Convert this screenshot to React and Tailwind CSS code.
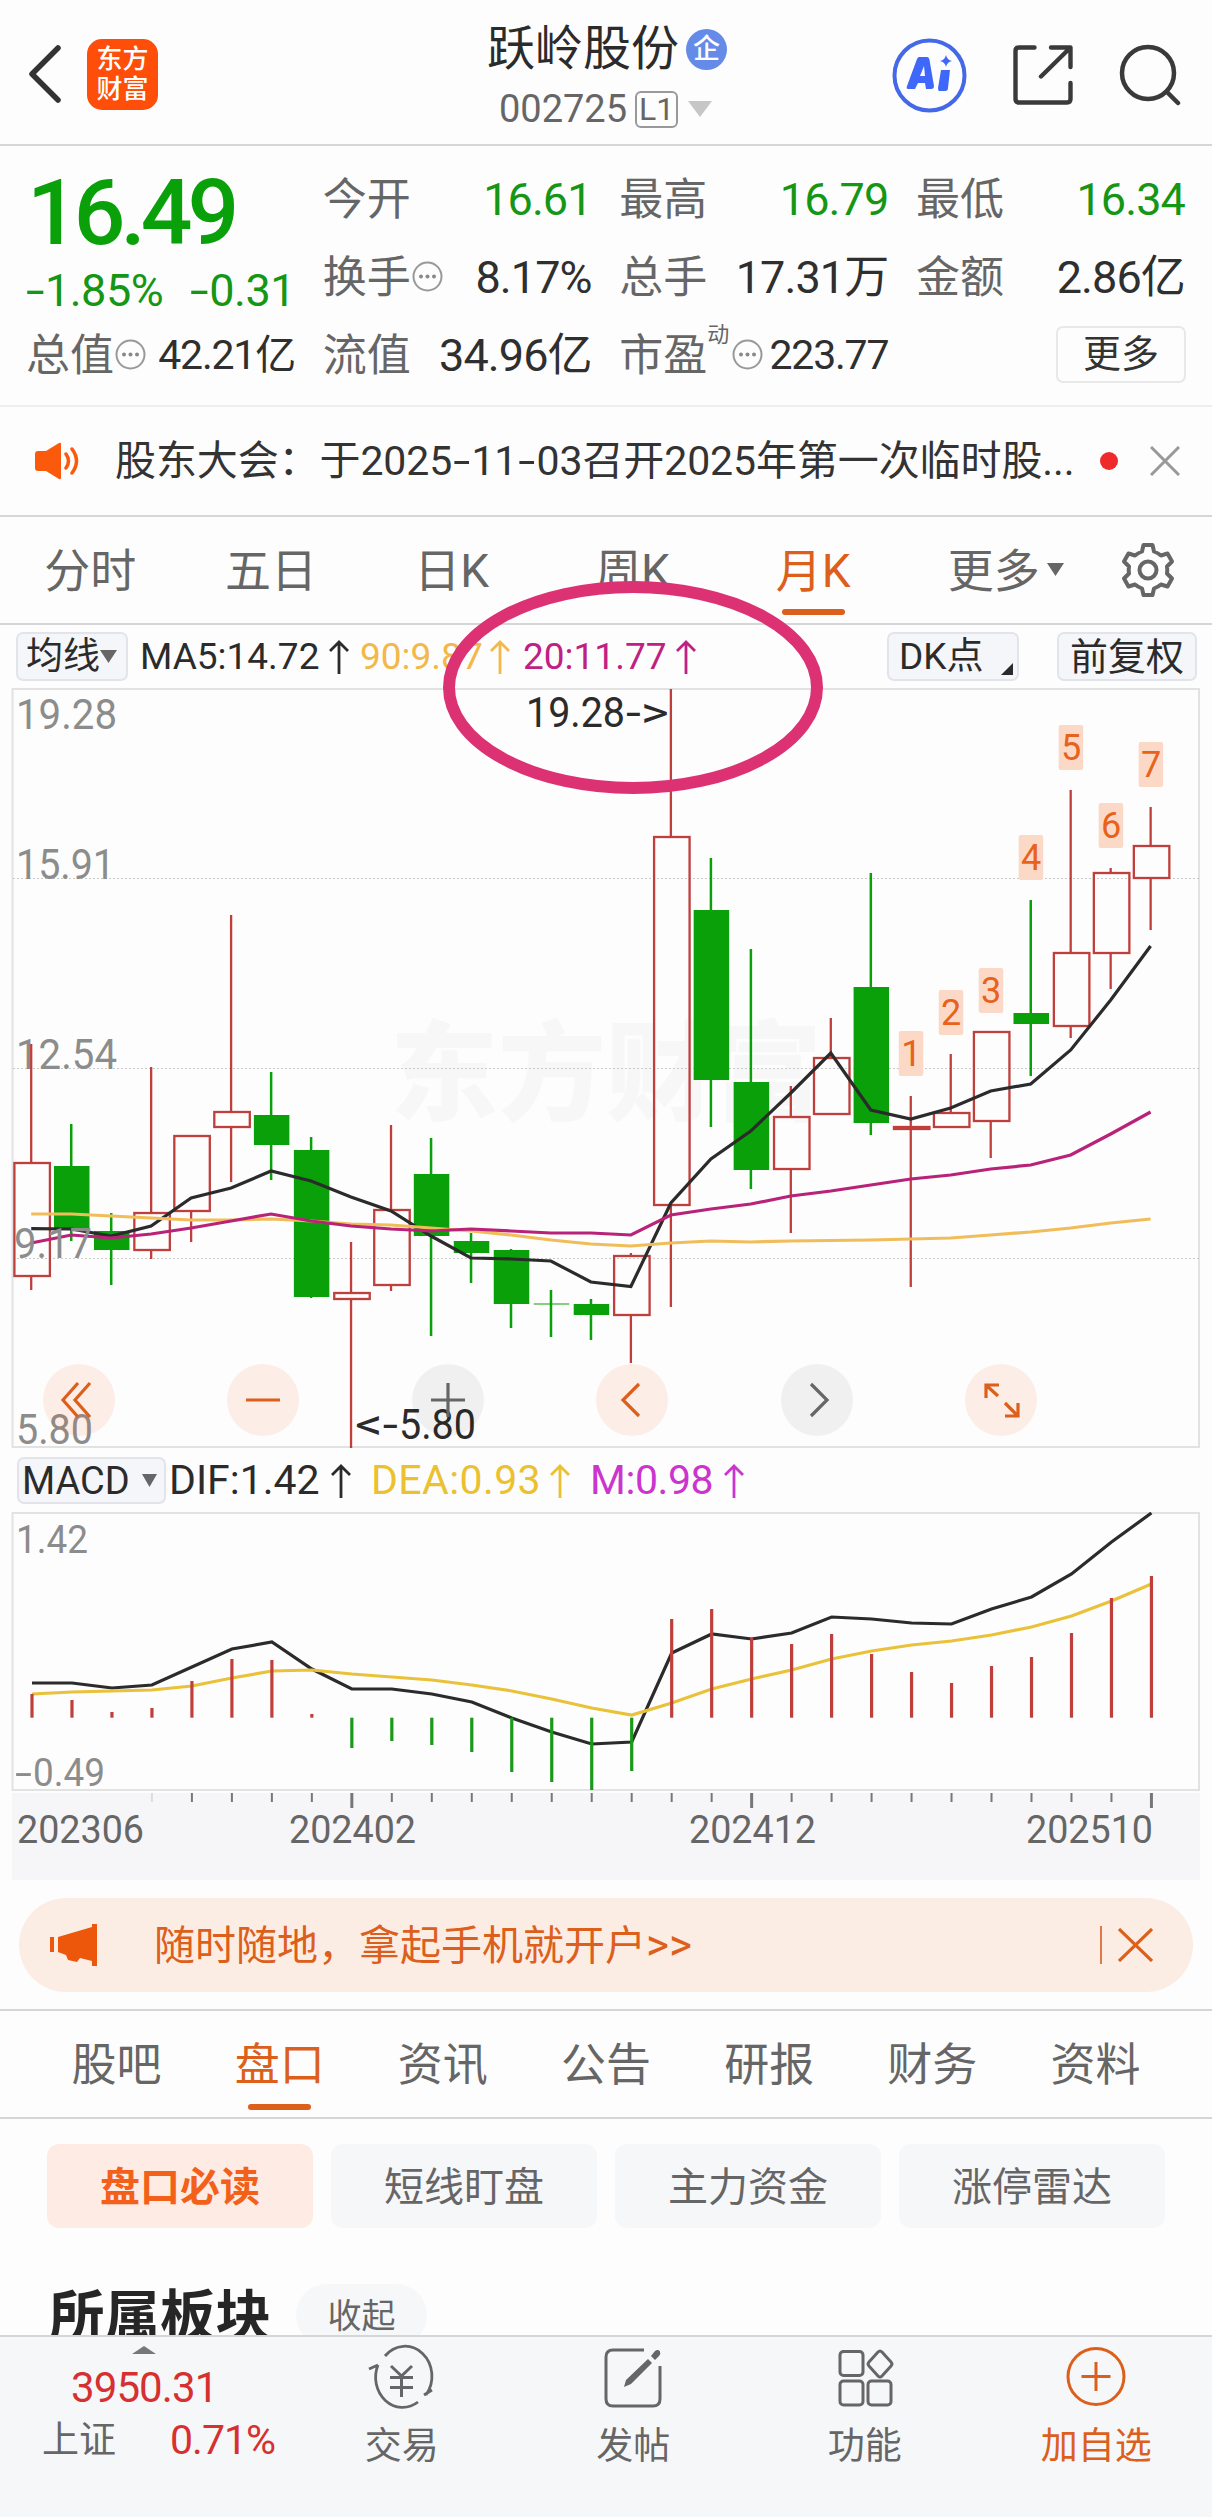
const RED = '#bf3f3c';
const GREEN = '#0aa00a';

// [up, high, bodyTop, bodyBottom, low]
const candles = [
    [1, 1044, 1163, 1276, 1290],
    [0, 1124, 1166, 1230, 1241],
    [0, 1213, 1231, 1250, 1285],
    [1, 1067, 1213, 1250, 1259],
    [1, 1136, 1136, 1211, 1242],
    [1, 915, 1112, 1127, 1182],
    [0, 1072, 1115, 1145, 1180],
    [0, 1137, 1150, 1297, 1298],
    [1, 1242, 1293, 1299, 1448],
    [1, 1125, 1210, 1285, 1291],
    [0, 1138, 1174, 1236, 1336],
    [0, 1233, 1241, 1253, 1283],
    [0, 1249, 1250, 1304, 1328],
    [0, 1290, 1303.5, 1304.5, 1337],
    [0, 1299, 1304, 1315, 1340],
    [1, 1253, 1256, 1315, 1363],
    [1, 689, 837, 1205, 1307],
    [0, 858, 910, 1080, 1127],
    [0, 949, 1082, 1170, 1189],
    [1, 1086, 1117, 1169, 1233],
    [1, 1018, 1058, 1114, 1114],
    [0, 873, 987, 1123, 1135],
    [1, 1096, 1127, 1129, 1287],
    [1, 1054, 1113, 1127, 1127],
    [1, 1032, 1032, 1121, 1158],
    [0, 900, 1013, 1024, 1076],
    [1, 790, 953, 1026, 1038],
    [1, 868, 873, 953, 989],
    [1, 807, 846, 878, 930],
];

const ma5 = [1228.7, 1229, 1236, 1226, 1198, 1188, 1171, 1181, 1197, 1211, 1236, 1258, 1259, 1261, 1282, 1286.5, 1203, 1159, 1131, 1093, 1053, 1110, 1119, 1108, 1091, 1084, 1050, 1000, 946];
const ma20 = [1243, 1235, 1238, 1234, 1228, 1221, 1214, 1221, 1226, 1229, 1231, 1229, 1231, 1233, 1233, 1235, 1215, 1209, 1204, 1196, 1191, 1185, 1179, 1175, 1169, 1165, 1155, 1134, 1112];
const ma90 = [1214, 1214, 1216, 1218, 1220, 1220, 1219, 1221, 1224, 1225, 1228, 1231, 1235, 1240, 1244, 1246, 1243, 1241, 1242, 1241, 1240.5, 1240, 1239, 1238, 1235, 1232, 1228, 1223, 1219];

const dif = [1683, 1683, 1688, 1685, 1667, 1649, 1642, 1669, 1689, 1689, 1694, 1702, 1718, 1732, 1744, 1742, 1653, 1634, 1639, 1633, 1617, 1619, 1623, 1624, 1609, 1597, 1574, 1542, 1513];
const dea = [1694, 1692, 1691, 1690, 1686, 1678, 1671, 1670, 1674, 1677, 1680, 1685, 1691, 1699, 1708, 1715, 1703, 1689, 1679, 1670, 1659, 1651, 1645, 1641, 1635, 1627, 1616, 1601, 1584];
const macd = [1694, 1700, 1712, 1708, 1681, 1659, 1660, 1714, 1748, 1741, 1745, 1752, 1772, 1782, 1790, 1771, 1619, 1609, 1638, 1644, 1634, 1654, 1672, 1683, 1666, 1657, 1633, 1598, 1576];
const ZERO = 1717.7;

// [number, candle index, top]
const tags = [[1, 22, 1031], [2, 23, 990], [3, 24, 968], [4, 25, 835], [5, 26, 725], [6, 27, 803], [7, 28, 742]];

const cx = (i) => 31.2 + 39.98 * i;
const line = (ys, dx = 0) => ys.map((y, i) => `${(cx(i) + dx).toFixed(1)},${y}`).join(' ');

function Label({ x, y, w, size = 42, fill = '#8c8c8c', children }) {
    return (
        <text x={x} y={y} fontSize={size} fill={fill} textLength={w} lengthAdjust="spacingAndGlyphs">{children}</text>
    );
}

// wide hyphen
function Dash() {
    return <span className="mx-[4px] inline-block scale-x-150">-</span>;
}

function Header() {
    return (
        <header className="h-[146px] border-b-2 border-[#d6d6d8] flex items-center justify-between pl-[27px] pr-[31px]">
            <div className="flex w-[300px] items-center gap-[24px] pt-1">
                <svg className="w-9 h-[60px]" viewBox="0 0 36 60" fill="none" stroke="#333" strokeWidth="5.5" strokeLinecap="round" strokeLinejoin="round">
                    <path d="M31 4 L5 30 L31 56" />
                </svg>
                <div className="flex h-[71px] w-[71px] flex-col items-center justify-center rounded-[15px] bg-[#ff4d0a] text-[26px] leading-[30px] font-medium text-white">
                    <span>东方</span>
                    <span>财富</span>
                </div>
            </div>
            <div className="flex flex-col items-center pt-[5px] pl-[3px]">
                <div className="flex items-center gap-[7px] pl-[3px]">
                    <h1 className="text-[48px] leading-[58px] text-[#2b2b2b]">跃岭股份</h1>
                    <span className="flex h-[41px] w-[41px] items-center justify-center rounded-full bg-[#658be8] text-[27px] leading-none font-medium text-white">企</span>
                </div>
                <div className="mt-[7px] flex items-center pt-[4px]">
                    <span className="text-[38px] leading-[40px] text-[#666]">002725</span>
                    <span className="ml-2 flex h-[37px] w-[43px] items-center justify-center rounded-[6px] border-2 border-[#999] text-[32px] leading-none text-[#666]">L1</span>
                    <svg className="ml-[10px] h-4 w-6" viewBox="0 0 24 16"><path d="M0 0H24L12 16Z" fill="#c6c6c6" /></svg>
                </div>
            </div>
            <div className="flex w-[300px] items-center justify-end gap-[46px] pt-[6px]">
                <svg className="h-[75px] w-[75px] shrink-0" viewBox="0 0 75 75">
                    <circle cx="37.5" cy="37.5" r="35" fill="none" stroke="#4368e8" strokeWidth="4" />
                    <path fillRule="evenodd" fill="#3f68fb" d="M27 19 H35 Q37 19 37.500 22 L42 48 Q42 51 39 51 H34 L33 45 H26 L23 51 H16 Q14 51 15 48 L25 21 Q26 19 27 19Z M32 28 L28 38 H33Z" />
                    <path fill="#3f68fb" d="M49 32 H58 L56 50 Q56 53 53 53 H47 Q46 53 46 50Z M54 17 Q55 22 60 23 Q55 24 54 29 Q53 24 48 23 Q53 22 54 17Z" />
                </svg>
                <svg className="h-[60px] w-[60px] shrink-0" viewBox="0 0 60 60" fill="none" stroke="#3a3a3a" strokeWidth="4.400" strokeLinecap="round" strokeLinejoin="round">
                    <path d="M21.500 2.500H6Q2.500 2.500 2.500 6V54Q2.500 57.500 6 57.500H54Q57.500 57.500 57.500 54V38" />
                    <path d="M38 2.500H57.500V22M57 3L28 31.500" />
                </svg>
                <svg className="h-[62px] w-[62px] shrink-0" viewBox="0 0 62 62" fill="none" stroke="#3a3a3a" strokeWidth="4.500" strokeLinecap="round">
                    <circle cx="29" cy="29" r="26" />
                    <path d="M48 48L59 59" />
                </svg>
            </div>
        </header>
    );
}

function Dots() {
    return (
        <svg className="h-[31px] w-[31px] shrink-0" viewBox="0 0 31 31">
            <circle cx="15.500" cy="15.500" r="14" fill="none" stroke="#999" strokeWidth="2" />
            <circle cx="9" cy="15.500" r="2" fill="#888" />
            <circle cx="15.500" cy="15.500" r="2" fill="#888" />
            <circle cx="22" cy="15.500" r="2" fill="#888" />
        </svg>
    );
}

function Stat({ label, value, green, dots, small, sup }) {
    return (
        <div className="flex h-[78px] items-center justify-between pt-[3px] leading-none">
            <div className="relative -ml-px flex items-center text-[44px] text-[#666]">
                {label}
                {sup && <span className="absolute -top-[10px] left-[88px] text-[22px]">{sup}</span>}
                {dots && <span className={sup ? 'ml-[25px] flex pb-[3px]' : 'ml-px flex pb-[3px]'}><Dots /></span>}
            </div>
            <span className={`${small ? 'text-[41px] tracking-[-1.2px]' : 'text-[45px] tracking-[-0.9px]'} whitespace-nowrap ${green ? 'text-[#159615]' : 'text-[#2f2f2f]'}`}>{value}</span>
        </div>
    );
}

function Quote() {
    return (
        <section className="flex h-[261px] justify-between border-b-2 border-[#eeeeee] px-[27px] pt-[13px]">
            <div className="w-[268px]">
                <div className="flex h-[106px] items-center pt-[3px] text-[91px] leading-none font-medium tracking-[-5px] text-[#0aa00a]">16.49</div>
                <div className="flex h-[50px] items-center justify-between text-[45px] leading-none tracking-[-0.5px] text-[#159615]">
                    <span className="-ml-[2px]"><Dash />1.85%</span>
                    <span><Dash />0.31</span>
                </div>
                <Stat label="总值" value="42.21亿" dots small />
            </div>
            <div className="w-[268px]">
                <Stat label="今开" value="16.61" green />
                <Stat label="换手" value="8.17%" dots />
                <Stat label="流值" value="34.96亿" />
            </div>
            <div className="w-[268px]">
                <Stat label="最高" value="16.79" green />
                <Stat label="总手" value="17.31万" />
                <Stat label="市盈" value="223.77" dots small sup="动" />
            </div>
            <div className="w-[268px]">
                <Stat label="最低" value="16.34" green />
                <Stat label="金额" value="2.86亿" />
                <div className="-mr-px flex h-[78px] items-center justify-end">
                    <button className="h-[57px] w-[130px] rounded-[7px] border-2 border-[#e8e8e8] text-[38px] leading-none text-[#333]">更多</button>
                </div>
            </div>
        </section>
    );
}

function Notice() {
    return (
        <section className="flex h-[110px] items-center border-b-2 border-[#d6d6d8] pr-[32px] pl-[35px]">
            <svg className="h-[38px] w-[46px]" viewBox="0 0 46 38">
                <path d="M3 9H11L24 1Q26 0 26 2V36Q26 38 24 37L11 29H3Q0 29 0 26V12Q0 9 3 9Z" fill="#fb5a0c" />
                <path d="M31 12Q36 19 31 26M37 7Q46 19 37 31" fill="none" stroke="#fb5a0c" strokeWidth="3.500" strokeLinecap="round" />
            </svg>
            <p className="ml-[34px] w-[960px] text-[41px] leading-none tracking-[-0.1px] whitespace-nowrap text-[#333]">股东大会：于2025<Dash />11<Dash />03召开2025年第一次临时股...</p>
            <span className="ml-[25px] h-[18px] w-[18px] rounded-full bg-[#ee2a2a]" />
            <svg className="ml-auto h-[30px] w-[30px]" viewBox="0 0 30 30" stroke="#999" strokeWidth="3"><path d="M1 1L29 29M29 1L1 29" /></svg>
        </section>
    );
}

function PeriodTabs() {
    const tabs = ['分时', '五日', '日K', '周K', '月K', '更多'];
    return (
        <nav className="flex h-[108px] items-center border-b-2 border-[#d6d6d8]">
            {tabs.map((t) => (
                <div key={t} className={`relative flex h-full w-[180.700px] items-center justify-center pt-[2px] text-[46px] leading-none ${t === '月K' ? 'text-[#dc5f1c]' : 'text-[#666]'}`}>
                    {t}
                    {t === '月K' && <span className="absolute bottom-[8px] h-[6px] w-[63px] rounded-full bg-[#dc5f1c]" />}
                    {t === '更多' && <svg className="absolute top-[46px] left-[144px] h-[13px] w-[17px]" viewBox="0 0 17 13"><path d="M0 0H17L8.500 13Z" fill="#666" /></svg>}
                </div>
            ))}
            <svg className="ml-[36px] h-[56px] w-[56px]" viewBox="0 0 56 56" fill="none" stroke="#666" strokeWidth="4" strokeLinejoin="round">
                <path d="M23.500 3H32.500L34 9.500Q38 11 41 13.500L47.500 11.500L52 19.500L47 24.500Q47.600 28 47 31.500L52 36.500L47.500 44.500L41 42.500Q38 45 34 46.500L32.500 53H23.500L22 46.500Q18 45 15 42.500L8.500 44.500L4 36.500L9 31.500Q8.400 28 9 24.500L4 19.500L8.500 11.500L15 13.500Q18 11 22 9.500Z" />
                <circle cx="28" cy="28" r="8.500" />
            </svg>
        </nav>
    );
}

function Arrow({ color }) {
    return (
        <svg className="h-[34px] w-[20px] shrink-0" viewBox="0 0 20 34" fill="none" stroke={color} strokeWidth="2.800"><path d="M10 34V2M1 11L10 2L19 11" /></svg>
    );
}

function MaBar() {
    return (
        <div className="flex h-[63px] items-center pl-[16px] text-[37px] leading-none whitespace-nowrap">
            <div className="flex h-[49px] w-[112px] items-center rounded-[7px] border-2 border-[#e2e4ea] bg-[#f5f6f9] pl-[8px] text-[#2b2b2b]">
                均线
                <svg className="h-[13px] w-[17px]" viewBox="0 0 17 13"><path d="M0 0H17L8.500 13Z" fill="#666" /></svg>
            </div>
            <div className="ml-[12px] flex w-[220px] items-center justify-between pr-[11px] text-[#2b2b2b]">MA5:14.72<Arrow color="#2b2b2b" /></div>
            <div className="flex w-[163px] items-center justify-between pr-[13px] text-[#f3b84a]">90:9.87<Arrow color="#f3b84a" /></div>
            <div className="flex w-[173px] items-center justify-between text-[#c01f83]">20:11.77<Arrow color="#c01f83" /></div>
            <div className="relative ml-auto flex h-[49px] w-[132px] items-center rounded-[7px] border-2 border-[#e2e4ea] bg-[#f5f6f9] pl-[10px] text-[#2b2b2b]">
                DK点
                <svg className="absolute right-[4px] bottom-[4px] h-3 w-3" viewBox="0 0 12 12"><path d="M12 0V12H0Z" fill="#2b2b2b" /></svg>
            </div>
            <div className="mr-[15px] ml-[38px] flex h-[49px] w-[140px] items-center justify-center rounded-[7px] border-2 border-[#e2e4ea] bg-[#f5f6f9] text-[38px] text-[#2b2b2b]">前复权</div>
        </div>
    );
}

function CandleChart() {
    return (
        <svg className="block h-[761px] w-[1212px]" viewBox="0 688 1212 761" fontFamily="Roboto, 'Noto Sans CJK SC', sans-serif">
            <text x="390" y="1112" fontSize="108" fontWeight="900" fill="#f7f7f7">东方财富</text>
            <rect x="12.500" y="689" width="1186.500" height="758" fill="none" stroke="#e2e2e2" strokeWidth="2" />
            {[878.5, 1068.5, 1258.5].map((y) => (
                <path key={y} d={`M13 ${y}H1199`} stroke="#c9c9c9" strokeWidth="1" strokeDasharray="2 2" />
            ))}
            <Label x="16" y="729" w="101">19.28</Label>
            <Label x="16" y="879" w="99">15.91</Label>
            <Label x="16" y="1069" w="101">12.54</Label>
            {candles.map(([up, hi, top, bottom, lo], i) => {
                const x = cx(i);
                if (!up) {
                    return (
                        <g key={i} fill={GREEN}>
                            <rect x={x - 1.2} y={hi} width="2.500" height={lo - hi} />
                            <rect x={x - 17.2} y={top} width="35.500" height={bottom - top} />
                        </g>
                    );
                }
                return (
                    <g key={i} stroke={RED} strokeWidth="2.300" fill="none">
                        <path d={`M${x} ${hi}V${top}M${x} ${bottom}V${lo}`} />
                        <rect x={x - 16.8} y={top} width="35.500" height={bottom - top} />
                    </g>
                );
            })}
            <g fill="none" strokeWidth="3.200">
                <polyline points={line(ma5)} stroke="#2b2b2b" />
                <polyline points={line(ma90)} stroke="#f0bd5a" />
                <polyline points={line(ma20)} stroke="#b92279" />
            </g>
            <Label x="14" y="1258" w="78">9.17</Label>
            <Label x="16" y="1444" w="77">5.80</Label>
            <text y="727" fontSize="42" fill="#2b2b2b">
                <tspan x="526" textLength="99" lengthAdjust="spacingAndGlyphs">19.28</tspan>
                <tspan x="626" textLength="43" lengthAdjust="spacingAndGlyphs">{'->'}</tspan>
            </text>
            <text y="1439" fontSize="42" fill="#2b2b2b">
                <tspan x="355" textLength="43" lengthAdjust="spacingAndGlyphs">{'<-'}</tspan>
                <tspan x="399" textLength="77" lengthAdjust="spacingAndGlyphs">5.80</tspan>
            </text>
            {tags.map(([n, i, y]) => (
                <g key={n}>
                    <rect x={cx(i) - 12} y={y} width="24.500" height="45" rx="2" fill="#fcd9c7" />
                    <text x={cx(i) + 0.5} y={y + 35} fontSize="36" fill="#e8621c" textAnchor="middle">{n}</text>
                </g>
            ))}
        </svg>
    );
}

function ChartButtons() {
    const items = [
        { d: 'M35 19L20 36L35 53M47 19L32 36L47 53', on: true },
        { d: 'M19 36H53', on: true },
        { d: 'M19 36H53M36 19V53', on: false },
        { d: 'M43 20L27 36L43 52', on: true },
        { d: 'M30 20L46 36L30 52', on: false },
        { d: 'M34 21H21V34M22 22L33 32M40 39L52 51M53 39V52H40', on: true },
    ];
    return (
        <div className="absolute bottom-[13px] left-[43px] flex gap-[112.400px]">
            {items.map(({ d, on }) => (
                <button key={d} className={`h-[72px] w-[72px] rounded-full ${on ? 'bg-[#f4661c]/10 text-[#dc5f1c]' : 'bg-black/5 text-[#666]'}`}>
                    <svg viewBox="0 0 72 72" fill="none" stroke="currentColor" strokeWidth="3.200"><path d={d} /></svg>
                </button>
            ))}
        </div>
    );
}

function MacdBar() {
    return (
        <div className="flex h-[63px] items-center pl-[17px] text-[41px] leading-none whitespace-nowrap">
            <div className="flex h-[47px] w-[149px] items-center justify-between rounded-[7px] border-2 border-[#e2e4ea] bg-[#f5f6f9] pr-[7px] pl-[3px] text-[38px] text-[#2b2b2b]">
                MACD
                <svg className="h-[13px] w-[15px]" viewBox="0 0 15 13"><path d="M0 0H15L7.500 13Z" fill="#666" /></svg>
            </div>
            <div className="ml-[3px] flex w-[182px] items-center justify-between text-[#2b2b2b]">DIF:1.42<Arrow color="#2b2b2b" /></div>
            <div className="ml-[20px] flex w-[199px] items-center justify-between tracking-[0.400px] text-[#ecc12f]">DEA:0.93<Arrow color="#ecc12f" /></div>
            <div className="ml-[20px] flex w-[154px] items-center justify-between tracking-[-0.400px] text-[#cb35cf]">M:0.98<Arrow color="#cb35cf" /></div>
        </div>
    );
}

function MacdChart() {
    return (
        <svg className="block h-[369px] w-[1212px]" viewBox="0 1512 1212 369" fontFamily="Roboto, 'Noto Sans CJK SC', sans-serif">
            <rect x="12.500" y="1513" width="1186.500" height="277" fill="none" stroke="#e2e2e2" strokeWidth="2" />
            <rect x="12" y="1793" width="1188" height="87" fill="#f6f6f8" />
            <Label x="16" y="1553" w="72" size={39}>1.42</Label>
            <text y="1786" fontSize="39" fill="#8c8c8c">
                <tspan x="15" textLength="17" lengthAdjust="spacingAndGlyphs">-</tspan>
                <tspan x="33" textLength="72" lengthAdjust="spacingAndGlyphs">0.49</tspan>
            </text>
            <g fill="none" strokeWidth="3.200">
                <polyline points={line(dif, 0.8)} stroke="#2b2b2b" />
                <polyline points={line(dea, 0.8)} stroke="#e9c239" />
            </g>
            {macd.map((y, i) => (
                <path key={i} d={`M${cx(i) + 0.8} ${ZERO}V${y}`} stroke={y < ZERO ? RED : '#1a991a'} strokeWidth="3.200" />
            ))}
            {macd.map((_, i) => {
                if (i < 3) return null;
                const major = i % 10 === 8;
                return <path key={i} d={`M${cx(i) + 0.8} 1793V${major ? 1808 : 1802}`} stroke={i === 3 ? '#ddd' : '#777'} strokeWidth={major ? 3 : 2} />;
            })}
            <Label x="17" y="1843" w="127" size={39} fill="#666">202306</Label>
            <Label x="289" y="1843" w="127" size={39} fill="#666">202402</Label>
            <Label x="689" y="1843" w="127" size={39} fill="#666">202412</Label>
            <Label x="1026" y="1843" w="127" size={39} fill="#666">202510</Label>
        </svg>
    );
}

function Promo() {
    return (
        <div className="mx-[19px] mt-[17px] mb-[17px] flex h-[94px] items-center rounded-[47px] bg-[#fcede4] pr-[40px] pl-[31px] text-[#dc5f1c]">
            <svg className="h-[42px] w-[47px]" viewBox="0 0 47 42" fill="#ec570b">
                <path d="M0 13H4V28H0Z M8 13L42 3V0H47V42H42V37L30 34L27 38L18 36L16 31L8 28Z" />
            </svg>
            <span className="ml-[57px] text-[41px] leading-none">随时随地，拿起手机就开户<span className="text-[44px] leading-none">&gt;&gt;</span></span>
            <span className="ml-auto h-[38px] w-[2px] bg-[#e0794a]" />
            <svg className="ml-[16px] h-[34px] w-[35px]" viewBox="0 0 35 34" stroke="#dc5f1c" strokeWidth="3.200"><path d="M1 1L34 33M34 1L1 33" /></svg>
        </div>
    );
}

function InfoTabs() {
    const tabs = ['股吧', '盘口', '资讯', '公告', '研报', '财务', '资料'];
    const pills = ['盘口必读', '短线盯盘', '主力资金', '涨停雷达'];
    return (
        <section>
            <nav className="flex h-[110px] items-center border-y-2 border-[#d6d6d8] px-[35px]">
                {tabs.map((t, i) => (
                    <div key={t} className={`relative flex h-full flex-1 items-center justify-center pt-[3px] text-[45px] leading-none ${i === 1 ? 'text-[#dc5f1c]' : 'text-[#666]'}`}>
                        {t}
                        {i === 1 && <span className="absolute bottom-[7px] h-[6px] w-[63px] rounded-full bg-[#dc5f1c]" />}
                    </div>
                ))}
            </nav>
            <div className="mt-[25px] flex gap-[18px] px-[47px]">
                {pills.map((p, i) => (
                    <button key={p} className={`h-[84px] flex-1 rounded-[12px] pt-[4px] text-[40px] leading-none ${i === 0 ? 'bg-[#feece4] font-bold text-[#f3601a]' : 'bg-[#f6f7f9] text-[#666]'}`}>{p}</button>
                ))}
            </div>
            <div className="mt-[56px] flex h-[51px] items-start overflow-hidden pl-[49px]">
                <h2 className="pt-[6px] text-[55.500px] leading-[55px] font-bold text-[#262626]">所属板块</h2>
                <span className="ml-[25px] flex h-[62px] w-[131px] shrink-0 items-center justify-center rounded-[31px] bg-[#f6f7f9] pt-[2px] text-[34px] leading-none text-[#666]">收起</span>
            </div>
        </section>
    );
}

function BottomItem({ label, children, active }) {
    return (
        <div className={`flex flex-1 flex-col items-center pt-[5px] ${active ? 'text-[#dc5f1c]' : 'text-[#666]'}`}>
            <svg className="h-[68px] w-[76px]" viewBox="0 0 76 68" fill="none" stroke="currentColor" strokeWidth="3">{children}</svg>
            <span className="mt-[18px] text-[37px] leading-none">{label}</span>
        </div>
    );
}

function BottomBar() {
    return (
        <footer className="flex h-[182px] border-t-2 border-[#d6d6d8] bg-[#f6f7f9]">
            <div className="w-[286px] leading-none">
                <svg className="mt-[9px] ml-[132px] h-2 w-6" viewBox="0 0 24 8"><path d="M12 0L24 8H0Z" fill="#777" /></svg>
                <div className="mt-[13px] pl-[71px] text-[42px] tracking-[-0.900px] text-[#d63031]">3950.31</div>
                <div className="mt-[11px] flex w-[275px] items-center justify-between pl-[42px] text-[37px] text-[#666]">
                    上证
                    <span className="text-[41px] tracking-[-1px] text-[#d63031]">0.71%</span>
                </div>
            </div>
            <BottomItem label="交易">
                <path d="M21 14A27 30 0 0 1 62 53M54 60A27 30 0 0 1 14 23M5 27L14 23M60 53L68 48" strokeWidth="2.800" />
                <path d="M27 24L37.500 34L48 24M26 35.500H49M26 45.500H49M37.500 34V55" />
            </BottomItem>
            <BottomItem label="发帖">
                <path d="M49 8H18Q11 8 11 15V57Q11 64 18 64H58Q65 64 65 57V24" />
                <path d="M29 45L31 38L53 17L57 21L36 42ZM56 14L60 9Q63 7 65 9.500Q66 12 64 14L60 18Z" fill="currentColor" stroke="none" />
            </BottomItem>
            <BottomItem label="功能">
                <rect x="13" y="9.500" width="23" height="24" rx="3.500" />
                <rect x="13" y="39" width="23" height="24" rx="3.500" />
                <rect x="41" y="39" width="23" height="24" rx="3.500" />
                <path d="M51 10Q53 8 55 10L64 20Q66 22 64 24L55 34Q53 36 51 34L42 24Q40 22 42 20Z" />
            </BottomItem>
            <BottomItem label="加自选" active>
                <circle cx="38" cy="34.500" r="28" />
                <path d="M38 20V49M23.500 34.500H52.500" />
            </BottomItem>
        </footer>
    );
}

export default function App() {
    return (
        <div className="relative flex h-[2517px] w-[1212px] flex-col overflow-hidden bg-[#fdfdfd] font-['Roboto','Noto_Sans_CJK_SC',sans-serif]">
            <Header />
            <Quote />
            <Notice />
            <PeriodTabs />
            <MaBar />
            <div className="relative">
                <CandleChart />
                <ChartButtons />
            </div>
            <MacdBar />
            <MacdChart />
            <Promo />
            <InfoTabs />
            <BottomBar />
            <svg className="absolute top-[580px] left-[441px] h-[216px] w-[384px]" viewBox="0 0 384 216">
                <ellipse cx="192" cy="107.500" rx="184" ry="100.500" fill="none" stroke="#dc3274" strokeWidth="12" />
            </svg>
        </div>
    );
}
